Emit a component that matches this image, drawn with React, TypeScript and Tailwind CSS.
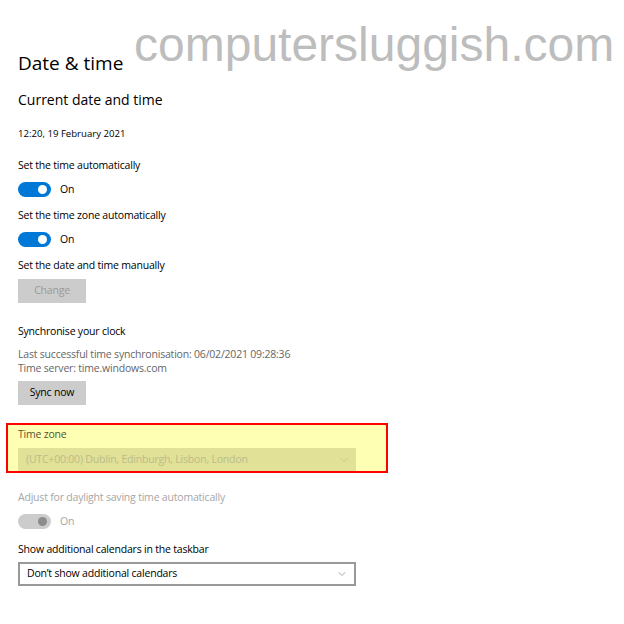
import { ChevronDown } from "lucide-react";

function Toggle({ disabled = false }: { disabled?: boolean }) {
  return (
    <div className="flex items-center h-[15px] mt-[9px]">
      <div
        className={`w-[33px] h-[15px] rounded-full flex items-center justify-end pr-[4px] ${
          disabled ? "bg-[#cccccc]" : "bg-[#0078d7]"
        }`}
      >
        <div
          className={`w-[9px] h-[9px] rounded-full ${
            disabled ? "bg-[#8c8c8c]" : "bg-white"
          }`}
        />
      </div>
      <span
        className={`ml-[9px] text-[10.5px] tracking-[-0.2px] ${
          disabled ? "text-[#a6a6a6]" : "text-black"
        }`}
      >
        On
      </span>
    </div>
  );
}

function Label({ children, muted = false }: { children: React.ReactNode; muted?: boolean }) {
  return (
    <p
      className={`text-[10.5px] leading-[15px] tracking-[-0.2px] ${
        muted ? "text-[#a6a6a6]" : "text-black"
      }`}
    >
      {children}
    </p>
  );
}

export default function App() {
  return (
    <div
      className="relative w-[624px] h-[624px] bg-white overflow-hidden"
      style={{ fontFamily: '"Open Sans", "Noto Sans", sans-serif' }}
    >
      {/* site watermark over the header */}
      <div
        className="absolute left-[134px] top-[14px] text-[48px] leading-[62px] text-[#bdbdbd]"
        style={{ fontFamily: '"Liberation Sans", Arial, sans-serif' }}
      >
        computersluggish.com
      </div>

      <div className="pl-[18px] pt-[50px]">
        <h1 className="text-[19px] leading-[26px] text-black">Date &amp; time</h1>
        <h2 className="mt-[14px] text-[14px] leading-[20px] text-black">Current date and time</h2>
        <p className="mt-[16px] text-[9.6px] leading-[15px] text-black">12:20, 19 February 2021</p>

        <div className="mt-[17px]">
          <Label>Set the time automatically</Label>
          <Toggle />
        </div>

        <div className="mt-[11px]">
          <Label>Set the time zone automatically</Label>
          <Toggle />
        </div>

        <div className="mt-[11px]">
          <Label>Set the date and time manually</Label>
          <button className="mt-[6px] w-[68px] h-[24px] bg-[#cccccc] text-[10.5px] tracking-[-0.2px] text-[#9a9a9a]">
            Change
          </button>
        </div>

        <div className="mt-[21px]">
          <Label>Synchronise your clock</Label>
          <p className="mt-[8px] text-[10.5px] leading-[14px] tracking-[-0.2px] text-[#666666]">
            Last successful time synchronisation: 06/02/2021 09:28:36
          </p>
          <p className="text-[10.5px] leading-[14px] tracking-[-0.2px] text-[#666666]">
            Time server: time.windows.com
          </p>
          <button className="mt-[6px] w-[68px] h-[24px] bg-[#cccccc] text-[10.5px] tracking-[-0.2px] text-black">
            Sync now
          </button>
        </div>
      </div>

      <div className="ml-[6px] mt-[18px] w-[382px] h-[50px] border-2 border-[#ff0000] bg-[#ffffb4] pl-[10px] pt-[2px]">
        <p className="text-[10.5px] leading-[15px] tracking-[-0.2px] text-[#555533]">Time zone</p>
        <div className="mt-[6px] w-[338px] h-[23px] bg-[#e1e197] flex items-center justify-between pl-[8px] pr-[6px]">
          <span className="text-[10.5px] tracking-[-0.2px] text-[#bcbc8a]">
            (UTC+00:00) Dublin, Edinburgh, Lisbon, London
          </span>
          <ChevronDown className="w-[12px] h-[12px] text-[#c4c48c]" strokeWidth={1.5} />
        </div>
      </div>

      <div className="pl-[18px] mt-[17px]">
        <Label muted>Adjust for daylight saving time automatically</Label>
        <Toggle disabled />

        <div className="mt-[13px]">
          <Label>Show additional calendars in the taskbar</Label>
          <div className="mt-[5px] w-[338px] h-[24px] border-2 border-[#999999] flex items-center justify-between pl-[7px] pr-[6px]">
            <span className="text-[10.5px] tracking-[-0.2px] text-black">Don’t show additional calendars</span>
            <ChevronDown className="w-[12px] h-[12px] text-[#888888]" strokeWidth={1.5} />
          </div>
        </div>
      </div>
    </div>
  );
}
